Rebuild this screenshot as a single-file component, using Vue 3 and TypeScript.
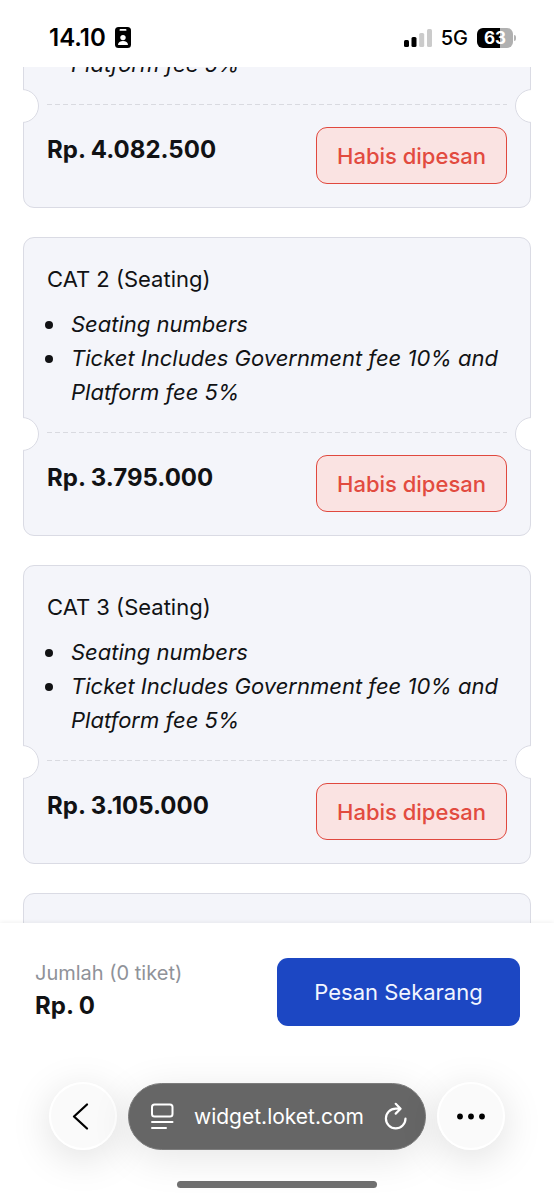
<script setup lang="ts">
import { onMounted, ref } from 'vue'

interface Ticket {
  id: number
  name: string
  notes: string[]
  price: string
}

const notes = ['Seating numbers', 'Ticket Includes Government fee 10% and Platform fee 5%']

const tickets: Ticket[] = [
  { id: 1, name: 'CAT 1 (Seating)', notes, price: 'Rp. 4.082.500' },
  { id: 2, name: 'CAT 2 (Seating)', notes, price: 'Rp. 3.795.000' },
  { id: 3, name: 'CAT 3 (Seating)', notes, price: 'Rp. 3.105.000' },
  { id: 4, name: 'CAT 4 (Seating)', notes, price: 'Rp. 2.415.000' },
]

const initialScroll = 182
const scroller = ref<HTMLElement | null>(null)

onMounted(() => {
  if (scroller.value) scroller.value.scrollTop = initialScroll
})
</script>

<template>
  <div class="screen">
    <header class="status">
      <div class="status-group">
        <span class="clock">14.10</span>
        <svg class="badge-icon" viewBox="0 0 16 21" aria-hidden="true">
          <rect width="16" height="21" rx="3.5" fill="#000" />
          <rect x="4.5" y="2" width="7" height="1.8" rx="0.9" fill="#fff" />
          <circle cx="8" cy="10.6" r="2.7" fill="#fff" />
          <path d="M3 18c0-2.600 2.100-4 5-4s5 1.400 5 4z" fill="#fff" />
        </svg>
      </div>
      <div class="status-group">
        <svg class="signal" viewBox="0 0 28 18" aria-hidden="true">
          <rect x="0" y="11" width="5" height="7" rx="1.500" fill="#000" />
          <rect x="7.500" y="8" width="5" height="10" rx="1.500" fill="#000" />
          <rect x="15.200" y="4" width="5" height="14" rx="1.500" fill="#cbcbcb" />
          <rect x="23" y="0" width="5" height="18" rx="1.500" fill="#cbcbcb" />
        </svg>
        <span class="network">5G</span>
        <span class="battery"><span class="battery-level">63</span></span>
      </div>
    </header>

    <main ref="scroller" class="scroller">
      <div class="tickets">
        <article v-for="ticket in tickets" :key="ticket.id" class="ticket">
          <h2 class="ticket-name">{{ ticket.name }}</h2>
          <ul class="notes">
            <li v-for="note in ticket.notes" :key="note">{{ note }}</li>
          </ul>
          <div class="tear"></div>
          <div class="ticket-foot">
            <span class="price">{{ ticket.price }}</span>
            <button type="button" class="sold-out">Habis dipesan</button>
          </div>
        </article>
      </div>
    </main>

    <footer class="bottom">
      <section class="summary">
        <div>
          <div class="count">Jumlah (0 tiket)</div>
          <div class="total">Rp. 0</div>
        </div>
        <button type="button" class="order">Pesan Sekarang</button>
      </section>

      <nav class="browser">
        <button type="button" class="round" aria-label="Back">
          <svg width="68" height="68" viewBox="0 0 68 68" aria-hidden="true">
            <path d="M38 22.500 25 34.500 38 46.500" fill="none" stroke="#000" stroke-width="2.300" stroke-linecap="round" stroke-linejoin="round" />
          </svg>
        </button>
        <div class="address">
          <button type="button" class="bare" aria-label="Page menu">
            <svg width="24" height="28" viewBox="0 0 24 28" fill="none" stroke="#fff" stroke-width="2" stroke-linecap="round" aria-hidden="true">
              <rect x="1" y="2.500" width="20.500" height="12" rx="2.500" />
              <path d="M1 20H21.500M1 26H15" />
            </svg>
          </button>
          <a class="url" href="#">widget.loket.com</a>
          <button type="button" class="bare" aria-label="Reload">
            <svg width="24" height="28" viewBox="0 0 24 28" fill="none" stroke="#fff" stroke-width="2.200" stroke-linecap="round" stroke-linejoin="round" aria-hidden="true">
              <path d="M22.500 16.500A9.800 9.800 0 1 1 12.700 6.700h4.600M12.700 1.800 17.600 6.700 12.700 11.600" />
            </svg>
          </button>
        </div>
        <button type="button" class="round" aria-label="More">
          <svg width="68" height="68" viewBox="0 0 68 68" fill="#000" aria-hidden="true">
            <circle cx="23" cy="34.500" r="2.900" />
            <circle cx="34" cy="34.500" r="2.900" />
            <circle cx="45" cy="34.500" r="2.900" />
          </svg>
        </button>
      </nav>
      <div class="home-bar"></div>
    </footer>
  </div>
</template>

<style>
body {
  margin: 0;
  background: #fff;
}
</style>

<style scoped>
.screen {
  display: flex;
  flex-direction: column;
  height: 100vh;
  overflow: hidden;
  background: #fff;
  color: #111214;
  font-family: Inter, "Liberation Sans", sans-serif;
}

button {
  font: inherit;
  cursor: pointer;
}

.status {
  display: flex;
  justify-content: space-between;
  align-items: center;
  box-sizing: border-box;
  flex: none;
  height: 67px;
  padding: 8px 41px 0 49px;
  color: #000;
}

.status-group {
  display: flex;
  align-items: center;
  gap: 9px;
}

.clock {
  font-size: 24px;
  font-weight: 600;
  line-height: 28px;
}

.badge-icon {
  width: 16px;
  height: 21px;
}

.signal {
  width: 28px;
  height: 18px;
}

.network {
  font-size: 20px;
  font-weight: 500;
  line-height: 24px;
}

.battery {
  position: relative;
  width: 36px;
  height: 20px;
}

.battery::after {
  content: "";
  position: absolute;
  top: 7px;
  right: -3px;
  width: 2px;
  height: 6px;
  border-radius: 0 2px 2px 0;
  background: #b4b4b4;
}

.battery-level {
  display: block;
  border-radius: 6px;
  background: linear-gradient(90deg, #000 63%, #b0b0b0 63%);
  color: #fff;
  font-size: 17px;
  font-weight: 700;
  line-height: 20px;
  text-align: center;
}

.scroller {
  flex: 1;
  min-height: 0;
  overflow-x: hidden;
  overflow-y: auto;
  scrollbar-width: none;
}

.tickets {
  display: flex;
  flex-direction: column;
  gap: 29px;
  padding: 24px 23px;
}

.ticket {
  padding: 24px 23px 23px;
  border: 1px solid #dadbe4;
  border-radius: 11px;
  background: #f4f5fa;
}

.ticket-name {
  margin: 0 0 11px;
  font-size: 22px;
  font-weight: 400;
  line-height: 34px;
}

.notes {
  margin: 0;
  padding: 0;
  font-size: 22px;
  font-style: italic;
  line-height: 34px;
  list-style: none;
}

.notes li {
  display: flex;
}

.notes li::before {
  content: "";
  flex: none;
  width: 8px;
  height: 8px;
  margin: 14px 18px 0 -2px;
  border-radius: 50%;
  background: #111214;
}

.tear {
  position: relative;
  height: 1px;
  margin: 23px 0 22px;
  background: repeating-linear-gradient(90deg, #d9dae0 0 5px, transparent 5px 8px);
}

/* Round cut-outs centred on the card's side borders; only the inner half shows. */
.tear::before,
.tear::after {
  content: "";
  position: absolute;
  top: -15px;
  box-sizing: border-box;
  width: 34px;
  height: 34px;
  border: 1px solid #dadbe4;
  border-radius: 50%;
  background: #fff;
}

.tear::before {
  left: -42px;
  clip-path: inset(0 0 0 18px);
}

.tear::after {
  right: -42px;
  clip-path: inset(0 18px 0 0);
}

.ticket-foot {
  display: flex;
  justify-content: space-between;
  align-items: flex-start;
}

.price {
  font-size: 24px;
  font-weight: 700;
  line-height: 46px;
}

.sold-out {
  box-sizing: border-box;
  min-width: 191px;
  height: 57px;
  padding: 0 16px;
  border: 1px solid #e0483e;
  border-radius: 11px;
  background: #fae3e2;
  color: #e24b3f;
  font-size: 22px;
  font-weight: 500;
}

.bottom {
  position: relative;
  flex: none;
  background: #fff;
  box-shadow: 0 -1px 4px rgba(0, 0, 0, 0.06);
}

.summary {
  display: flex;
  justify-content: space-between;
  align-items: flex-start;
  padding: 35px 34px 0 35px;
}

.count {
  color: #8f9299;
  font-size: 20px;
  line-height: 30px;
}

.total {
  font-size: 24px;
  font-weight: 700;
  line-height: 36px;
}

.order {
  min-width: 243px;
  height: 68px;
  padding: 0 24px;
  border: 0;
  border-radius: 11px;
  background: #1c47c3;
  color: #f2f6ff;
  font-size: 22px;
}

.browser {
  display: flex;
  align-items: center;
  gap: 11px;
  padding: 56px 49px 31px;
}

.round {
  flex: none;
  box-sizing: border-box;
  width: 68px;
  height: 68px;
  padding: 0;
  border: 0;
  border-radius: 50%;
  background: #fafafa;
  box-shadow: inset 0 0 0 2px #fff, 0 8px 40px rgba(0, 0, 0, 0.13);
}

.round svg {
  display: block;
}

.address {
  display: flex;
  flex: 1;
  justify-content: space-between;
  align-items: center;
  box-sizing: border-box;
  height: 67px;
  padding: 0 18px 0 22px;
  border: 1px solid #7c7c7c;
  border-radius: 34px;
  background: #666;
  box-shadow: 0 8px 40px rgba(0, 0, 0, 0.1);
}

.bare {
  display: flex;
  padding: 0;
  border: 0;
  background: none;
}

.url {
  color: #fff;
  font-size: 21px;
  text-decoration: none;
}

.home-bar {
  width: 36%;
  height: 7px;
  margin: 0 auto 11px;
  border-radius: 4px;
  background: #707070;
}
</style>
